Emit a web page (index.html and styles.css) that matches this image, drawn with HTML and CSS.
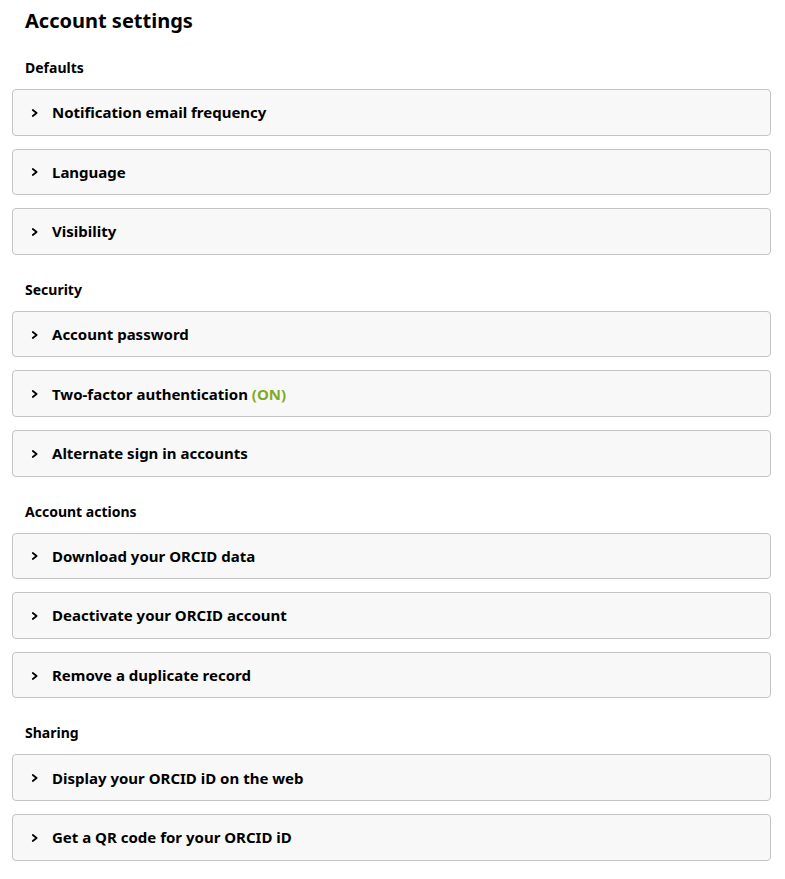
FILE: index.html
```html
<!DOCTYPE html>
<html lang="en">
<head>
<meta charset="utf-8">
<title>Account settings</title>
<link rel="stylesheet" href="styles.css">
</head>
<body>
<main class="page">
  <h1 class="title">Account settings</h1>

  <h2 class="section">Defaults</h2>
  <div class="panel"><svg class="chev" viewBox="0 0 8 10"><path d="M1.8 2 L5.6 5 L1.8 8"/></svg><span class="label">Notification email frequency</span></div>
  <div class="panel"><svg class="chev" viewBox="0 0 8 10"><path d="M1.8 2 L5.6 5 L1.8 8"/></svg><span class="label">Language</span></div>
  <div class="panel"><svg class="chev" viewBox="0 0 8 10"><path d="M1.8 2 L5.6 5 L1.8 8"/></svg><span class="label">Visibility</span></div>

  <h2 class="section">Security</h2>
  <div class="panel"><svg class="chev" viewBox="0 0 8 10"><path d="M1.8 2 L5.6 5 L1.8 8"/></svg><span class="label">Account password</span></div>
  <div class="panel"><svg class="chev" viewBox="0 0 8 10"><path d="M1.8 2 L5.6 5 L1.8 8"/></svg><span class="label">Two-factor authentication <span class="on">(ON)</span></span></div>
  <div class="panel"><svg class="chev" viewBox="0 0 8 10"><path d="M1.8 2 L5.6 5 L1.8 8"/></svg><span class="label">Alternate sign in accounts</span></div>

  <h2 class="section">Account actions</h2>
  <div class="panel"><svg class="chev" viewBox="0 0 8 10"><path d="M1.8 2 L5.6 5 L1.8 8"/></svg><span class="label">Download your ORCID data</span></div>
  <div class="panel"><svg class="chev" viewBox="0 0 8 10"><path d="M1.8 2 L5.6 5 L1.8 8"/></svg><span class="label">Deactivate your ORCID account</span></div>
  <div class="panel"><svg class="chev" viewBox="0 0 8 10"><path d="M1.8 2 L5.6 5 L1.8 8"/></svg><span class="label">Remove a duplicate record</span></div>

  <h2 class="section">Sharing</h2>
  <div class="panel"><svg class="chev" viewBox="0 0 8 10"><path d="M1.8 2 L5.6 5 L1.8 8"/></svg><span class="label">Display your ORCID iD on the web</span></div>
  <div class="panel"><svg class="chev" viewBox="0 0 8 10"><path d="M1.8 2 L5.6 5 L1.8 8"/></svg><span class="label">Get a QR code for your ORCID iD</span></div>
</main>
</body>
</html>
```

FILE: styles.css
```css
* { box-sizing: border-box; }
html, body { margin: 0; padding: 0; background: #fff; }
body {
  font-family: "Noto Sans", "Open Sans", sans-serif;
  color: #000;
}
.page {
  padding: 0 14px 0 12px;
  display: flex;
  flex-direction: column;
}
.title {
  font-size: 20px;
  font-weight: 700;
  line-height: 28px;
  margin: 7px 0 0 13px;
}
.section {
  font-size: 14px;
  font-weight: 700;
  line-height: 20px;
  margin: 0 0 11px 13px;
  padding-top: 12px;
}
.title + .section { padding-top: 23px; }
.panel {
  display: flex;
  align-items: center;
  height: 46.6px;
  margin-bottom: 13px;
  border: 1px solid #c4c4c4;
  border-radius: 4px;
  background: #f8f8f8;
  padding-left: 18px;
}
.chev {
  width: 8px;
  height: 10px;
  fill: none;
  stroke: #000;
  stroke-width: 1.8;
  stroke-linecap: round;
  stroke-linejoin: round;
  margin-right: 13px;
  position: relative;
  top: 0.5px;
}
.label {
  font-size: 15px;
  font-weight: 700;
  line-height: 20px;
}
.on { color: #7faa26; }
```
